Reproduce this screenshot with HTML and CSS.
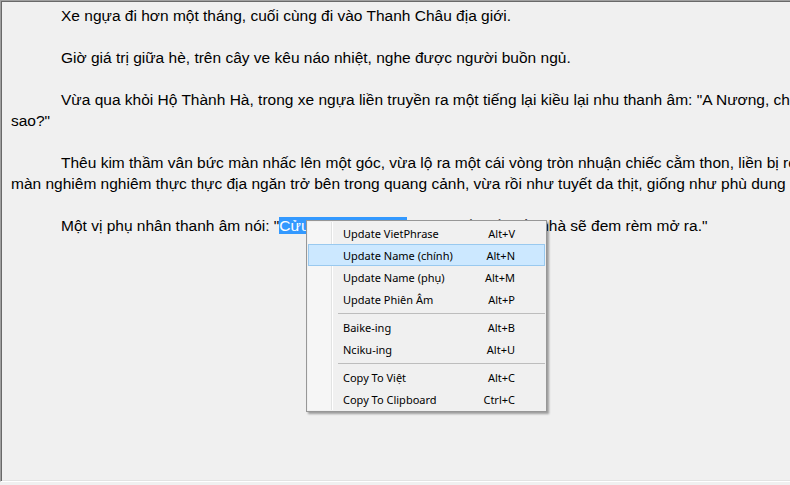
FILE: index.html
```html
<!DOCTYPE html>
<html lang="vi">
<head>
<meta charset="utf-8">
<title>Reader</title>
<link rel="stylesheet" href="styles.css">
</head>
<body>
<div class="frame">
  <div class="text">
    <p class="para"><span class="indent"></span>Xe ngựa đi hơn một tháng, cuối cùng đi vào Thanh Châu địa giới.</p>
    <p class="para"><span class="indent"></span>Giờ giá trị giữa hè, trên cây ve kêu náo nhiệt, nghe được người buồn ngủ.</p>
    <p class="para"><span class="indent"></span>Vừa qua khỏi Hộ Thành Hà, trong xe ngựa liền truyền ra một tiếng lại kiều lại nhu thanh âm: "A Nương, chúng ta còn bao xa mới đến<br>sao?"</p>
    <p class="para"><span class="indent"></span>Thêu kim thầm vân bức màn nhấc lên một góc, vừa lộ ra một cái vòng tròn nhuận chiếc cằm thon, liền bị rèm<br>màn nghiêm nghiêm thực thực địa ngăn trở bên trong quang cảnh, vừa rồi như tuyết da thịt, giống như phù dung hoa nở.</p>
    <p class="para"><span class="indent"></span>Một vị phụ nhân thanh âm nói: "<span class="sel">Cửu cô nương, đã</span> tới cửa rồi, về tiếp nhà sẽ đem rèm mở ra."</p>
  </div>
</div>

<div class="menu">
  <div class="gutter"></div>
  <div class="item"><span class="label">Update VietPhrase</span><span class="key">Alt+V</span></div>
  <div class="item active"><span class="label">Update Name (chính)</span><span class="key">Alt+N</span></div>
  <div class="item"><span class="label">Update Name (phụ)</span><span class="key">Alt+M</span></div>
  <div class="item"><span class="label">Update Phiên Âm</span><span class="key">Alt+P</span></div>
  <div class="sep"></div>
  <div class="item"><span class="label">Baike-ing</span><span class="key">Alt+B</span></div>
  <div class="item"><span class="label">Nciku-ing</span><span class="key">Alt+U</span></div>
  <div class="sep"></div>
  <div class="item"><span class="label">Copy To Việt</span><span class="key">Alt+C</span></div>
  <div class="item"><span class="label">Copy To Clipboard</span><span class="key">Ctrl+C</span></div>
</div>
</body>
</html>
```

FILE: styles.css
```css
html, body {
  margin: 0;
  padding: 0;
  overflow: hidden;
  background: #f0f0f0;
  height: 100%;
}

body {
  font-family: "Liberation Sans", Arial, sans-serif;
  color: #000;
}

.frame {
  box-sizing: border-box;
  width: 1000px;
  height: 482px;
  border-top: 1px solid #a0a0a0;
  border-left: 1px solid #a0a0a0;
  border-bottom: 1px solid #ffffff;
  border-right: 1px solid #ffffff;
  box-shadow: inset 1px 1px 0 #696969, inset -1px -1px 0 #e3e3e3;
  background: #f0f0f0;
  overflow: hidden;
}

.text {
  padding: 4px 0 0 10px;
  font-size: 15.5px;
  line-height: 21px;
  white-space: nowrap;
}

.para {
  margin: 0 0 21px 0;
}

.indent {
  display: inline-block;
  width: 50px;
}

.sel {
  background: #3399ff;
  color: #ffffff;
}

.menu {
  position: absolute;
  left: 306px;
  top: 220px;
  width: 237px;
  border: 1px solid #979797;
  padding: 1px;
  background: #f0f0f0;
  box-shadow: 2px 2px 2px rgba(0, 0, 0, 0.35);
  font-family: "Noto Sans", "Open Sans", sans-serif;
  font-size: 11px;
}

.gutter {
  position: absolute;
  left: 1px;
  top: 1px;
  bottom: 1px;
  width: 23px;
  background: #f6f6f6;
  border-right: 1px solid #e2e3e3;
  box-shadow: 1px 0 0 #ffffff;
}

.item {
  position: relative;
  height: 22px;
  display: flex;
  align-items: center;
  justify-content: space-between;
  padding: 0 29px 0 34px;
  box-sizing: border-box;
  border: 1px solid transparent;
  color: #000;
}

.item.active {
  background: #cce8ff;
  border-color: #99c9ef;
}

.sep {
  position: relative;
  height: 6px;
  margin-left: 30px;
  display: flex;
  align-items: center;
}

.sep::after {
  content: "";
  display: block;
  width: 100%;
  height: 1px;
  background: #bdbdbd;
}
```
